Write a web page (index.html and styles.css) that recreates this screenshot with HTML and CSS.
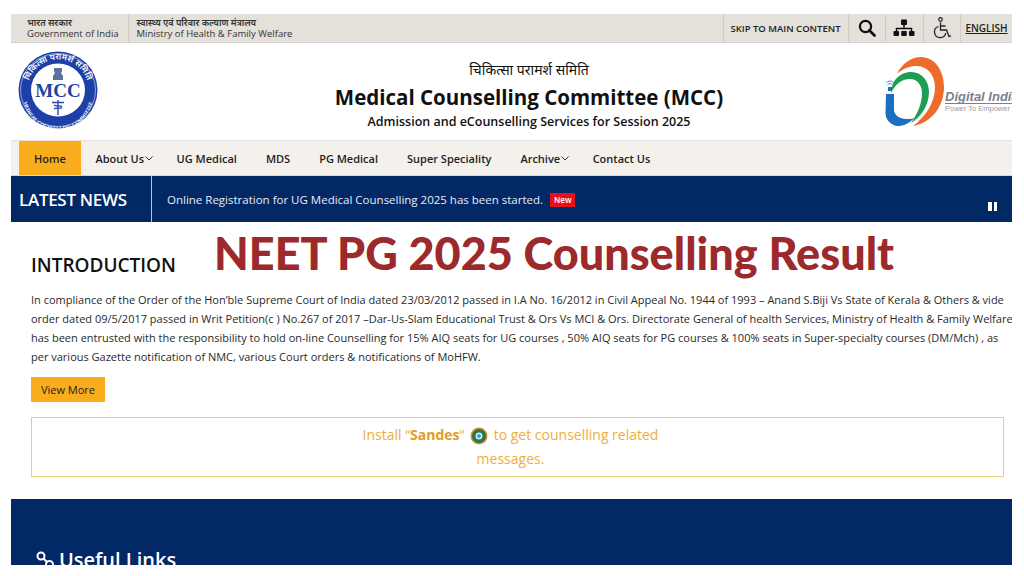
FILE: index.html
```html
<!DOCTYPE html>
<html lang="en">
<head>
<meta charset="utf-8">
<title>Medical Counselling Committee (MCC)</title>
<link rel="stylesheet" href="styles.css">
</head>
<body>
<div class="page">
  <div class="topbar">
    <div class="gov gov-a"><span class="hi">भारत सरकार</span><span>Government of India</span></div>
    <div class="gov gov-b"><span class="hi">स्वास्थ्य एवं परिवार कल्याण मंत्रालय</span><span>Ministry of Health &amp; Family Welfare</span></div>
    <div class="tools">
      <a class="tool skip">SKIP TO MAIN CONTENT</a>
      <a class="tool icon">
        <svg width="18" height="18" viewBox="0 0 18 18"><circle cx="7.5" cy="7.5" r="5.6" fill="none" stroke="#111" stroke-width="2.2"/><path d="M11.5 11.5L16.5 16.5" stroke="#111" stroke-width="2.8" stroke-linecap="round"/></svg>
      </a>
      <a class="tool icon">
        <svg width="22" height="18" viewBox="0 0 22 18"><rect x="8" y="0.5" width="6" height="5.5" rx="1" fill="#111"/><path d="M11 6v4M3.500 12.500V9.500H18.500V12.500" fill="none" stroke="#111" stroke-width="1.500"/><rect x="0.500" y="12" width="5.500" height="5" rx="1" fill="#111"/><rect x="8.250" y="12" width="5.500" height="5" rx="1" fill="#111"/><rect x="16" y="12" width="5.500" height="5" rx="1" fill="#111"/></svg>
      </a>
      <a class="tool icon">
        <svg width="20" height="22" viewBox="0 0 20 22"><circle cx="8.500" cy="2.500" r="1.800" fill="none" stroke="#222" stroke-width="1.200"/><path d="M8.500 5.500V13H14.500L17 19.500L19 18.800M8.500 9H13.500" fill="none" stroke="#222" stroke-width="1.300"/><path d="M6.500 9.500A5.700 5.700 0 1 0 13.800 16" fill="none" stroke="#222" stroke-width="1.300"/></svg>
      </a>
      <a class="tool lang">ENGLISH</a>
    </div>
  </div>

  <header class="masthead">
    <svg class="mcc-logo" width="80" height="78" viewBox="0 0 80 78">
      <defs>
        <path id="arcTop" d="M9.500 39A30 30 0 0 1 70.500 39"/>
        <path id="arcBottom" d="M5 44A35 35 0 0 0 75 44"/>
      </defs>
      <ellipse cx="40" cy="39" rx="39.500" ry="38.500" fill="#1c3fa8"/>
      <ellipse cx="40" cy="39" rx="37.500" ry="36.500" fill="none" stroke="#dfe6f6" stroke-width=".6"/>
      <ellipse cx="40" cy="39" rx="27" ry="26.500" fill="#fff"/>
      <text class="ring-hi"><textPath href="#arcTop" startOffset="50%" text-anchor="middle">चिकित्सा परामर्श समिति</textPath></text>
      <text class="ring-en"><textPath href="#arcBottom" startOffset="50%" text-anchor="middle">MEDICAL COUNSELLING COMMITTEE</textPath></text>
      <path d="M36 17h8v3l-1 2 2 3v4h-10v-4l2-3-1-2z" fill="#5c6f9e"/>
      <text x="40" y="46" class="mcc-mark" text-anchor="middle">MCC</text>
      <path d="M40 49v15M34 51.500h12M36 54c3 2 5 0 8 1.500M36 58c3-2 5 0 8-1.500" fill="none" stroke="#2a4aa8" stroke-width="1.400"/>
    </svg>
    <div class="title">
      <div class="title-hi">चिकित्सा परामर्श समिति</div>
      <h1>Medical Counselling Committee (MCC)</h1>
      <div class="title-sub">Admission and eCounselling Services for Session 2025</div>
    </div>
    <div class="di">
      <svg width="60" height="70" viewBox="0 0 60 70">
        <path d="M12 17C17 6 27 0 36 0C50 0 59 14 59 30C59 50 46 66 28 69C40 60 50 46 50 30C50 16 40 8 30 9C24 9.500 17 12 12 17Z" fill="#ee6b2b"/>
        <path d="M6 36C6 24 15 15 26 15C37 15 44 24 44 35C44 48 36 60 26 66C33 56 37 46 37 36C37 28 32 22 25 22C16 22 10 28 6 36Z" fill="#1e9e55"/>
        <path d="M1 37H9V53C9 58 15 62 21 62C24 62 27 62 29 61C24 67 17 69.500 12 69C6 68 0.500 63 0.500 56Z" fill="#1b6fbe"/>
        <path d="M3 30h4v4H3z" fill="#1b6fbe"/>
        <path d="M1 26a5 5 0 0 1 8 0M2.500 28a3 3 0 0 1 5 0" fill="none" stroke="#3b9ad6" stroke-width="1"/>
      </svg>
      <div class="di-text"><span class="di-name">Digital India</span><span class="di-tag">Power To Empower</span></div>
    </div>
  </header>

  <nav class="nav">
    <a class="nav-item active">Home</a>
    <a class="nav-item caret">About Us<svg width="8" height="5" viewBox="0 0 8 5"><path d="M.5.5L4 4 7.500.5" fill="none" stroke="#333" stroke-width="1"/></svg></a>
    <a class="nav-item">UG Medical</a>
    <a class="nav-item">MDS</a>
    <a class="nav-item">PG Medical</a>
    <a class="nav-item">Super Speciality</a>
    <a class="nav-item caret">Archive<svg width="8" height="5" viewBox="0 0 8 5"><path d="M.5.5L4 4 7.500.5" fill="none" stroke="#333" stroke-width="1"/></svg></a>
    <a class="nav-item">Contact Us</a>
  </nav>

  <section class="news">
    <div class="news-label">LATEST NEWS</div>
    <div class="news-text">Online Registration for UG Medical Counselling 2025 has been started.<span class="badge">New</span></div>
    <div class="pause"><i></i><i></i></div>
  </section>

  <main class="intro">
    <div class="banner">NEET PG 2025 Counselling Result</div>
    <h2>INTRODUCTION</h2>
    <p>In compliance of the Order of the Hon’ble Supreme Court of India dated 23/03/2012 passed in I.A No. 16/2012 in Civil Appeal No. 1944 of 1993 – Anand S.Biji Vs State of Kerala &amp; Others &amp; vide<br>order dated 09/5/2017 passed in Writ Petition(c ) No.267 of 2017 –Dar-Us-Slam Educational Trust &amp; Ors Vs MCI &amp; Ors. Directorate General of health Services, Ministry of Health &amp; Family Welfare<br>has been entrusted with the responsibility to hold on-line Counselling for 15% AIQ seats for UG courses , 50% AIQ seats for PG courses &amp; 100% seats in Super-specialty courses (DM/Mch) , as<br>per various Gazette notification of NMC, various Court orders &amp; notifications of MoHFW.</p>
    <a class="more">View More</a>
    <div class="sandes">
      <div class="sandes-text">Install “<b>Sandes</b>“ <svg class="sandes-icon" width="18" height="18" viewBox="0 0 18 18"><circle cx="9" cy="9" r="8.500" fill="#e58a2b"/><circle cx="9" cy="9" r="7" fill="#1f7a4d"/><circle cx="9" cy="9" r="3.500" fill="#cfe7ee"/><circle cx="9" cy="9" r="1.800" fill="#3b8fb0"/></svg> to get counselling related messages.</div>
    </div>
  </main>

  <footer class="foot">
    <h3><svg width="19" height="19" viewBox="0 0 19 19"><g fill="none" stroke="#fff" stroke-width="2"><circle cx="5" cy="5" r="3.500"/><circle cx="13.500" cy="13.500" r="3.500"/><path d="M7.500 7.500L11 11"/></g></svg>Useful Links</h3>
  </footer>
</div>
</body>
</html>
```

FILE: styles.css
```css
* { box-sizing: border-box; }
html, body { margin: 0; padding: 0; background: #fff; }
body { font-family: "Open Sans", "Noto Sans", "DejaVu Sans", sans-serif; color: #222; height: 576px; overflow: hidden; }
a { color: inherit; text-decoration: none; }

.page { width: 1001px; height: 565px; margin: 0 0 0 11px; padding-top: 14px; overflow: hidden; }

/* top bar */
.topbar { height: 29px; background: #e4e0da; border-bottom: 1px solid #d5d1ca; display: flex; align-items: stretch; }
.gov { display: flex; flex-direction: column; justify-content: center; font-size: 9.5px; line-height: 11px; color: #333; white-space: nowrap; }
.gov .hi { font-weight: 600; font-size: 9px; }
.gov-a { padding: 0 9px 0 16px; border-right: 1px solid #d0ccc5; }
.gov-b { padding-left: 8px; }
.tools { margin-left: auto; display: flex; align-items: stretch; }
.tool { display: flex; align-items: center; justify-content: center; border-left: 1px solid #d0ccc5; }
.skip { width: 125px; font-size: 9.5px; font-weight: 600; color: #222; }
.icon { width: 37.500px; }
.lang { width: 52px; font-size: 10px; font-weight: 600; text-decoration: underline; color: #222; }

/* masthead */
.masthead { height: 97px; display: flex; align-items: flex-start; position: relative; }
.mcc-logo { margin: 8px 0 0 7px; flex: none; }
.ring-hi { font-size: 8.500px; fill: #fff; font-weight: 600; }
.ring-en { font-size: 5px; fill: #fff; font-weight: 700; font-family: "Liberation Serif", serif; }
.mcc-mark { font-family: "Liberation Serif", serif; font-weight: 700; font-size: 19px; fill: #2342a5; }
.title { position: absolute; left: 0; right: 0; top: 17px; text-align: center; padding-left: 35px; color: #111; }
.title-hi { font-size: 14px; line-height: 20px; }
h1 { margin: 3px 0 0; font-size: 20.500px; line-height: 28px; font-weight: 700; color: #111; }
.title-sub { font-size: 12.500px; line-height: 16px; font-weight: 600; margin-top: 3px; }
.di { margin: 14px 0 0 auto; width: 127px; display: flex; align-items: flex-start; overflow: hidden; flex: none; }
.di svg { flex: none; }
.di-text { margin: 33px 0 0 0; display: flex; flex-direction: column; white-space: nowrap; font-family: "Liberation Sans", sans-serif; }
.di-name { font-size: 13px; line-height: 13px; font-style: italic; font-weight: 700; color: #7b8191; border-bottom: 1px solid #7b8191; }
.di-tag { font-size: 7.500px; line-height: 10px; color: #9a9a9a; }

/* nav */
.nav { height: 36px; background: #f4f1ec; border-top: 1px solid #e6e3dd; border-bottom: 1px solid #d8d5cf; display: flex; align-items: stretch; padding-left: 8px; font-size: 11px; font-weight: 600; color: #222; white-space: nowrap; }
.nav-item { display: flex; align-items: center; padding: 0 14.500px; gap: 1px; }
.nav-item.active { width: 62px; padding: 0; justify-content: center; background: #f9ac1c; }
.nav-item.caret { padding-right: 9px; }

/* news */
.news { height: 46px; background: #032866; color: #fff; display: flex; align-items: center; position: relative; }
.news-label { width: 141px; height: 100%; display: flex; align-items: center; padding-left: 8px; font-size: 17px; font-weight: 600; letter-spacing: -.3px; border-right: 1px solid #b8c2d4; }
.news-text { padding-left: 15px; font-size: 11.500px; color: #e8ecf3; }
.badge { display: inline-block; margin-left: 7px; padding: 0 4px; background: #e8101c; color: #fff; font-size: 8px; line-height: 14px; font-weight: 600; vertical-align: 1px; }
.pause { position: absolute; right: 15px; top: 26px; display: flex; gap: 2px; }
.pause i { width: 3.500px; height: 9px; background: #fff; display: block; }

/* intro */
.intro { padding: 0 8px 0 20px; height: 277px; position: relative; }
.banner { position: absolute; left: 203px; top: 6px; font-family: Lato, sans-serif; font-weight: 900; font-size: 45px; line-height: 50px; color: #9c2a2c; white-space: nowrap; }
h2 { margin: 0; padding-top: 30px; font-size: 19px; line-height: 26px; font-weight: 600; color: #111; }
.intro p { margin: 12px 0 0; font-size: 11px; line-height: 19px; color: #2a2a2a; white-space: nowrap; }
.more { display: flex; align-items: center; justify-content: center; width: 74px; height: 25px; margin-top: 11px; background: #f9ac1c; font-size: 11px; font-weight: 500; color: #222; }
.sandes { margin-top: 15px; height: 60px; border: 1px solid #eacf7a; display: flex; align-items: center; justify-content: center; padding-right: 14px; }
.sandes-text { width: 320px; text-align: center; font-size: 14px; line-height: 24px; color: #efae38; }
.sandes-text b { font-weight: 700; color: #e49b1e; }
.sandes-icon { vertical-align: -5px; margin: 0 2px; }

/* footer */
.foot { height: 70px; background: #032866; color: #fff; padding: 47px 0 0 25px; }
h3 { margin: 0; display: flex; align-items: center; gap: 4px; font-size: 20px; line-height: 28px; font-weight: 600; }
```
